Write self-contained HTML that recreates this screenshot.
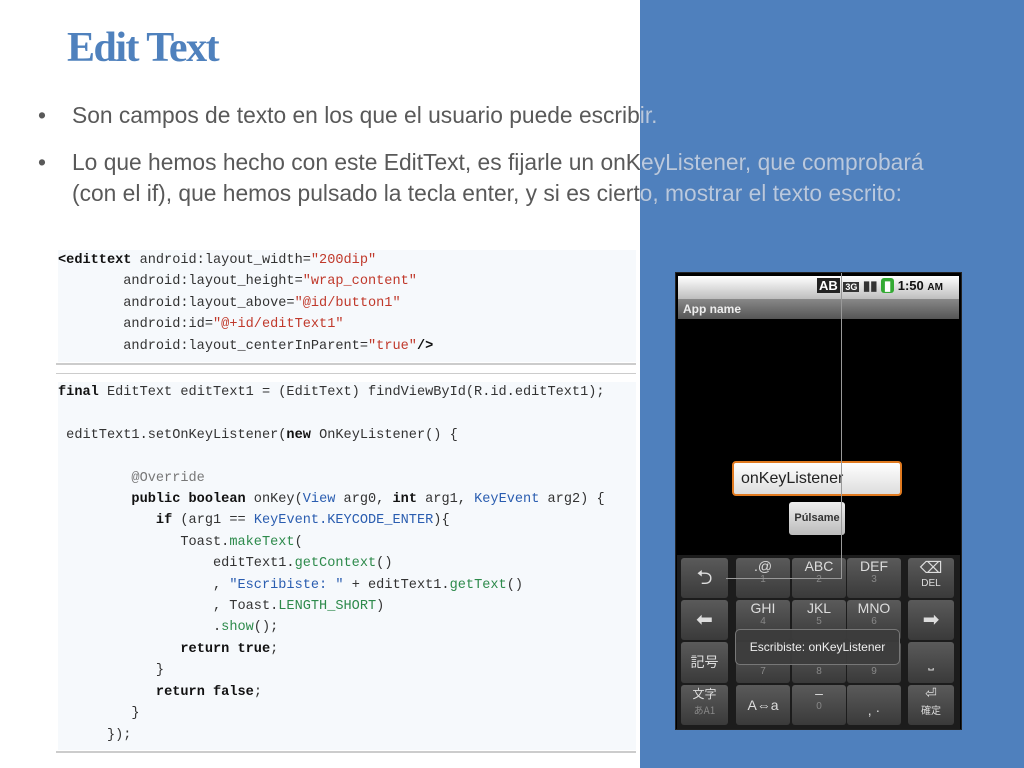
<!DOCTYPE html>
<html><head><meta charset="utf-8"><style>
body{margin:0;width:1024px;height:768px;position:relative;overflow:hidden;background:#fff;font-family:"Liberation Sans",sans-serif}
.abs{position:absolute}
#blue{left:640px;top:0;width:384px;height:768px;background:#4f80bd}
.txt{left:0;top:0;width:1024px;height:240px}
.title{position:absolute;left:67px;top:24px;font-family:"Liberation Serif",serif;font-weight:bold;font-size:42px;color:#4f81bd;letter-spacing:-1.5px}
.b{position:absolute;font-size:22.8px;color:#595959;line-height:31px;white-space:nowrap}
.code{left:58px;width:578px;background:#f6f9fc;font-family:"Liberation Mono",monospace;font-size:13.6px;color:#333;white-space:pre;line-height:21.4px}
.code b{color:#111}
.s{color:#c0392b}.g{color:#2d8a4b}.bl{color:#2a5db0}.gr{color:#777}
.phone{left:675px;top:272px;width:285px;height:456px;background:#000;border:1px solid #222}
.k{position:absolute;background:linear-gradient(#5a5a5a,#3a3a3a);border-radius:3px;color:#ddd;text-align:center;font-size:14px}
.k small{display:block;font-size:10px;color:#888}
</style></head><body>
<div class="abs" id="blue"></div>
<div class="abs txt">
<div class="title">Edit Text</div>
<div class="b" style="left:38px;top:100px">•</div><div class="b" style="left:72px;top:100px">Son campos de texto en los que el usuario puede escribir.</div>
<div class="b" style="left:38px;top:147px">•</div><div class="b" style="left:72px;top:147px">Lo que hemos hecho con este EditText, es fijarle un onKeyListener, que comprobará</div>
<div class="b" style="left:72px;top:178px">(con el if), que hemos pulsado la tecla enter, y si es cierto, mostrar el texto escrito:</div>
</div>
<div class="abs txt" style="clip-path:inset(0 0 0 640px)">
<div class="b" style="left:72px;top:100px;color:#b9c9e0">Son campos de texto en los que el usuario puede escribir.</div>
<div class="b" style="left:72px;top:147px;color:#b9c9e0">Lo que hemos hecho con este EditText, es fijarle un onKeyListener, que comprobará</div>
<div class="b" style="left:72px;top:178px;color:#b9c9e0">(con el if), que hemos pulsado la tecla enter, y si es cierto, mostrar el texto escrito:</div>
</div>
<div class="abs" style="left:56px;top:248px;width:580px;height:505px;background:#fff"></div>
<div class="abs code" style="top:250px;height:112px;padding-top:0"><b>&lt;edittext</b> android:layout_width=<span class="s">"200dip"</span>
        android:layout_height=<span class="s">"wrap_content"</span>
        android:layout_above=<span class="s">"@id/button1"</span>
        android:id=<span class="s">"@+id/editText1"</span>
        android:layout_centerInParent=<span class="s">"true"</span><b>/&gt;</b></div>
<div class="abs" style="left:56px;top:363px;width:580px;height:2px;background:#ccc"></div>
<div class="abs" style="left:56px;top:373px;width:580px;height:1px;background:#ccc"></div>
<div class="abs code" style="top:382px;height:368px"><b>final</b> EditText editText1 = (EditText) findViewById(R.id.editText1);

 editText1.setOnKeyListener(<b>new</b> OnKeyListener() {

         <span class="gr">@Override</span>
         <b>public boolean</b> onKey(<span class="bl">View</span> arg0, <b>int</b> arg1, <span class="bl">KeyEvent</span> arg2) {
            <b>if</b> (arg1 == <span class="bl">KeyEvent.KEYCODE_ENTER</span>){
               Toast.<span class="g">makeText</span>(
                   editText1.<span class="g">getContext</span>()
                   , <span class="bl">"Escribiste: "</span> + editText1.<span class="g">getText</span>()
                   , Toast.<span class="g">LENGTH_SHORT</span>)
                   .<span class="g">show</span>();
               <b>return true</b>;
            }
            <b>return false</b>;
         }
      });</div>
<div class="abs" style="left:56px;top:751px;width:580px;height:2px;background:#ccc"></div>

<div class="abs phone">
 <div class="abs" style="left:2px;top:3px;width:281px;height:24px;background:linear-gradient(#fff,#bbb)"></div>
 <div class="abs" style="left:141px;top:5px;font-size:13px;font-weight:bold;color:#111;white-space:nowrap"><span style="background:#222;color:#fff;padding:0 2px">AB</span> <span style="background:#333;color:#fff;padding:0 2px;font-size:9px">3G</span> <span style="color:#333">▮▮</span> <span style="background:#3a3;color:#fff;padding:0 3px;border-radius:3px">▮</span> 1:50 <span style="font-size:10px">AM</span></div>
 <div class="abs" style="left:2px;top:26px;width:281px;height:20px;background:linear-gradient(#888,#555);color:#eee;font-size:12px;font-weight:bold;line-height:20px;padding-left:5px;box-sizing:border-box">App name</div>
 <div class="abs" style="left:56px;top:188px;width:170px;height:35px;background:linear-gradient(#fff,#ddd);border:2px solid #e07a20;border-radius:4px;font-size:16px;line-height:31px;color:#222;padding-left:7px;box-sizing:border-box">onKeyListener</div>
 <div class="abs" style="left:113px;top:229px;width:56px;height:33px;background:linear-gradient(#eee,#bbb);border-radius:3px;font-size:11px;font-weight:bold;line-height:33px;text-align:center;color:#333">Púlsame</div>
 <div class="abs" style="left:1px;top:282px;width:283px;height:174px;background:#1c1c1c"></div>
 <div class="k" style="left:5px;top:285px;width:47px;height:40px;line-height:40px;font-size:20px">⮌</div>
 <div class="k" style="left:60px;top:285px;width:54px;height:40px">.@<small>1</small></div>
 <div class="k" style="left:116px;top:285px;width:54px;height:40px">ABC<small>2</small></div>
 <div class="k" style="left:171px;top:285px;width:54px;height:40px">DEF<small>3</small></div>
 <div class="k" style="left:232px;top:285px;width:46px;height:40px;font-size:16px">⌫<small style="color:#ddd">DEL</small></div>
 <div class="k" style="left:5px;top:327px;width:47px;height:40px;line-height:40px;font-size:20px">⬅</div>
 <div class="k" style="left:60px;top:327px;width:54px;height:40px">GHI<small>4</small></div>
 <div class="k" style="left:116px;top:327px;width:54px;height:40px">JKL<small>5</small></div>
 <div class="k" style="left:171px;top:327px;width:54px;height:40px">MNO<small>6</small></div>
 <div class="k" style="left:232px;top:327px;width:46px;height:40px;line-height:40px;font-size:20px">➡</div>
 <div class="k" style="left:5px;top:369px;width:47px;height:41px;line-height:41px;font-family:'Noto Sans CJK JP',sans-serif">記号</div>
 <div class="k" style="left:60px;top:369px;width:54px;height:41px;line-height:60px"><small>7</small></div>
 <div class="k" style="left:116px;top:369px;width:54px;height:41px;line-height:60px"><small>8</small></div>
 <div class="k" style="left:171px;top:369px;width:54px;height:41px;line-height:60px"><small>9</small></div>
 <div class="k" style="left:232px;top:369px;width:46px;height:41px;line-height:41px">⎵</div>
 <div class="k" style="left:5px;top:412px;width:47px;height:40px;font-family:'Noto Sans CJK JP',sans-serif;font-size:12px">文字<small>あA1</small></div>
 <div class="k" style="left:60px;top:412px;width:54px;height:40px;line-height:40px">A⇔a</div>
 <div class="k" style="left:116px;top:412px;width:54px;height:40px">–<small>0</small></div>
 <div class="k" style="left:171px;top:412px;width:54px;height:40px;line-height:50px">, ·</div>
 <div class="k" style="left:232px;top:412px;width:46px;height:40px;font-size:14px">⏎<small style="color:#ddd;font-family:'Noto Sans CJK JP',sans-serif">確定</small></div>
 <div class="abs" style="left:59px;top:356px;width:163px;height:34px;background:rgba(60,60,60,.95);border:1px solid #777;border-radius:5px;color:#eee;font-size:12px;line-height:34px;text-align:center">Escribiste: onKeyListener</div>
 <div class="abs" style="left:165px;top:0;width:1px;height:305px;background:#999"></div>
 <div class="abs" style="left:50px;top:305px;width:116px;height:1px;background:#999"></div>
</div>
</body></html>
